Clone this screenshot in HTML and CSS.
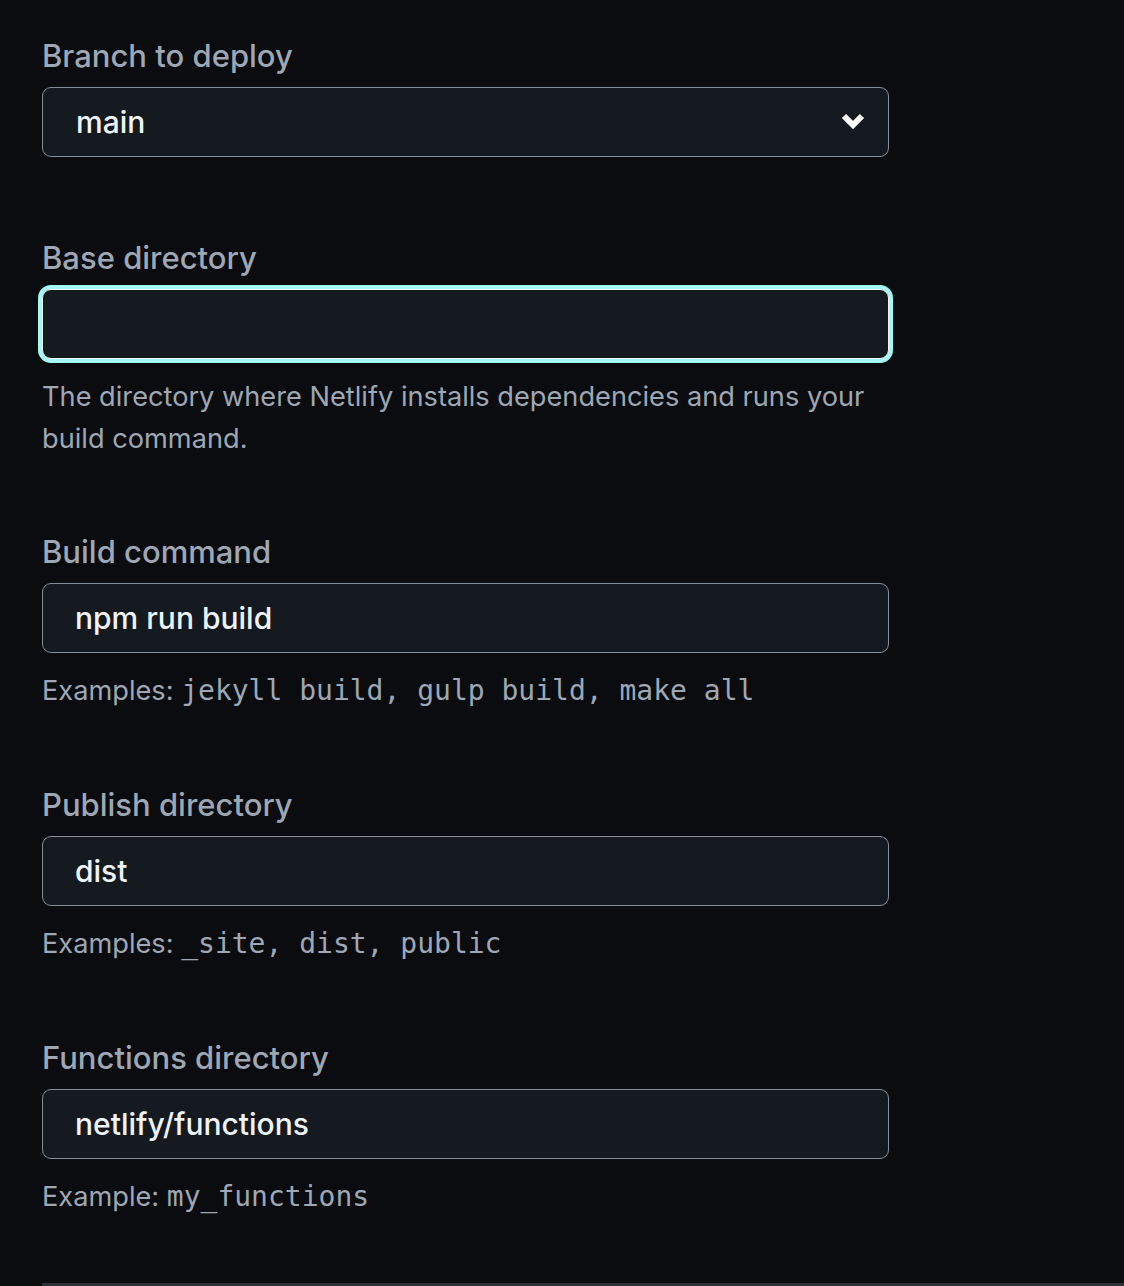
FILE: index.html
```html
<!DOCTYPE html>
<html lang="en">
<head>
<meta charset="utf-8">
<title>Build settings</title>
<link rel="stylesheet" href="styles.css">
</head>
<body>
<main class="form">
  <div class="field field--plain">
    <label class="label" for="branch">Branch to deploy</label>
    <div class="select-wrap">
      <select id="branch" class="control control--select">
        <option>main</option>
      </select>
      <svg class="chevron" viewBox="0 0 26 18" width="26" height="18" aria-hidden="true">
        <path d="M4 4 L13 13 L22 4" fill="none" stroke="#ffffff" stroke-width="6" stroke-linejoin="miter" stroke-linecap="butt"/>
      </svg>
    </div>
  </div>

  <div class="field field--tight">
    <label class="label" for="base">Base directory</label>
    <input id="base" class="control is-focused" type="text" value="">
    <p class="help">The directory where Netlify installs dependencies and runs your build command.</p>
  </div>

  <div class="field">
    <label class="label" for="cmd">Build command</label>
    <input id="cmd" class="control" type="text" value="npm run build">
    <p class="help">Examples: <code>jekyll build, gulp build, make all</code></p>
  </div>

  <div class="field">
    <label class="label" for="pub">Publish directory</label>
    <input id="pub" class="control" type="text" value="dist">
    <p class="help">Examples: <code>_site, dist, public</code></p>
  </div>

  <div class="field">
    <label class="label" for="fn">Functions directory</label>
    <input id="fn" class="control" type="text" value="netlify/functions">
    <p class="help">Example: <code>my_functions</code></p>
  </div>

  <div class="divider"></div>
</main>
</body>
</html>
```

FILE: styles.css
```css
html, body {
  margin: 0;
  padding: 0;
  background: #0a0c10;
}

body {
  font-family: Inter, "Noto Sans", "Liberation Sans", sans-serif;
  color: #9ea7b3;
  overflow: hidden;
}

.form {
  padding: 36px 0 0 42px;
  display: flex;
  flex-direction: column;
}

.field {
  width: 847px;
  display: flex;
  flex-direction: column;
  margin-bottom: 73px;
}

.field--plain {
  margin-bottom: 81px;
}

.field--tight {
  margin-bottom: 72px;
}

.label {
  font-size: 31px;
  line-height: 40px;
  font-weight: 500;
  color: #9ea7b3;
  margin-bottom: 11px;
}

.control {
  box-sizing: border-box;
  width: 847px;
  height: 70px;
  margin: 0;
  padding: 0 32px;
  background: #151a21;
  border: 1px solid #858d97;
  border-radius: 9px;
  color: #f0f3f6;
  font-family: Inter, "Noto Sans", "Liberation Sans", sans-serif;
  font-size: 30px;
  font-weight: 500;
  outline: none;
}

.control.is-focused {
  border: 1.5px solid #eef6f8;
  box-shadow: 0 0 0 4px #a5f6f6;
}

.select-wrap {
  position: relative;
  width: 847px;
}

.control--select {
  -webkit-appearance: none;
  appearance: none;
  padding-left: 33px;
  display: block;
}

.chevron {
  position: absolute;
  right: 23px;
  top: 25px;
  pointer-events: none;
}

.help {
  margin: 17px 0 0;
  font-size: 27.2px;
  line-height: 42px;
  color: #9ea7b3;
}

.help code {
  font-family: "DejaVu Sans Mono", "Liberation Mono", monospace;
  font-size: 28px;
  color: #9ea7b3;
}

.divider {
  margin-top: -8px;
  width: 1082px;
  height: 3px;
  background: #2d3139;
}
```
